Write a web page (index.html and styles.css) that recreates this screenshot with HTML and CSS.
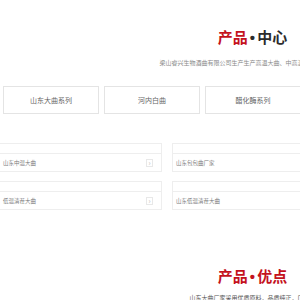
FILE: index.html
```html
<!DOCTYPE html>
<html lang="zh-CN">
<head>
    <meta charset="UTF-8">
    <title>产品中心</title>
    <link rel="stylesheet" href="styles.css">
</head>
<body>
    <div class="page">
        <section class="products">
            <h2 class="section-title"><span class="red">产品</span><span class="dot">•</span>中心</h2>
            <p class="section-sub">梁山睿兴生物酒曲有限公司生产生产高温大曲、中高温大曲、低温大曲</p>

            <div class="tabs">
                <div class="tab">山东大曲系列</div>
                <div class="tab">河内白曲</div>
                <div class="tab">醋化酶系列</div>
                <div class="tab">麸曲系列</div>
                <div class="tab">其他产品</div>
            </div>

            <div class="cards">
                <div class="card">
                    <div class="card-head"></div>
                    <div class="card-body">
                        <span>山东中温大曲</span>
                        <span class="arrow">›</span>
                    </div>
                </div>
                <div class="card">
                    <div class="card-head"></div>
                    <div class="card-body">
                        <span>山东包包曲厂家</span>
                        <span class="arrow">›</span>
                    </div>
                </div>
                <div class="card">
                    <div class="card-head"></div>
                    <div class="card-body">
                        <span>低温清茬大曲</span>
                        <span class="arrow">›</span>
                    </div>
                </div>
                <div class="card">
                    <div class="card-head"></div>
                    <div class="card-body">
                        <span>山东低温清茬大曲</span>
                        <span class="arrow">›</span>
                    </div>
                </div>
            </div>
        </section>

        <section class="advantages">
            <h2 class="section-title red">产品<span class="dot">•</span>优点</h2>
            <p class="section-sub">山东大曲厂家采用优质原料，品质纯正，口感好</p>
        </section>
    </div>
</body>
</html>
```

FILE: styles.css
```css
* {
    margin: 0;
    padding: 0;
    box-sizing: border-box;
}

body {
    font-family: "Noto Sans CJK SC", "Noto Sans", sans-serif;
    background-color: #ffffff;
    overflow: hidden;
}

.page {
    width: 505px;
}

.section-title {
    text-align: center;
    font-size: 15px;
    font-weight: bold;
    line-height: 20px;
    color: #2b2b2b;
}

.section-title .dot {
    font-family: "Liberation Sans", sans-serif;
    margin: 0 2px;
}

.products .section-title {
    padding-top: 27px;
}

.red {
    color: #c4121d;
}

.section-sub {
    text-align: center;
    font-size: 6px;
    line-height: 8px;
    color: #8a8a8a;
    margin-top: 11px;
    white-space: nowrap;
}

.advantages .section-sub {
    margin-top: 7px;
    color: #555555;
}

.tabs {
    display: flex;
    gap: 5px;
    padding-left: 3px;
    margin-top: 19px;
}

.tab {
    width: 96px;
    height: 28px;
    flex-shrink: 0;
    border: 1px solid #e4e4e4;
    display: flex;
    align-items: center;
    justify-content: center;
    font-size: 7px;
    color: #666666;
}

.cards {
    display: grid;
    grid-template-columns: 163px 163px;
    column-gap: 10px;
    row-gap: 9px;
    margin-left: -1px;
    margin-top: 29px;
}

.card {
    border: 1px solid #eeeeee;
}

.card-head {
    height: 10px;
    border-bottom: 1px solid #eeeeee;
}

.card-body {
    height: 17px;
    display: flex;
    align-items: center;
    justify-content: space-between;
    padding: 0 8px 0 3px;
    font-size: 5.5px;
    color: #7a7a7a;
}

.arrow {
    width: 7px;
    height: 8px;
    border: 1px solid #e8e8e8;
    display: flex;
    align-items: center;
    justify-content: center;
    font-size: 7px;
    line-height: 1;
    color: #bbbbbb;
}

.advantages {
    margin-top: 56px;
}
```
